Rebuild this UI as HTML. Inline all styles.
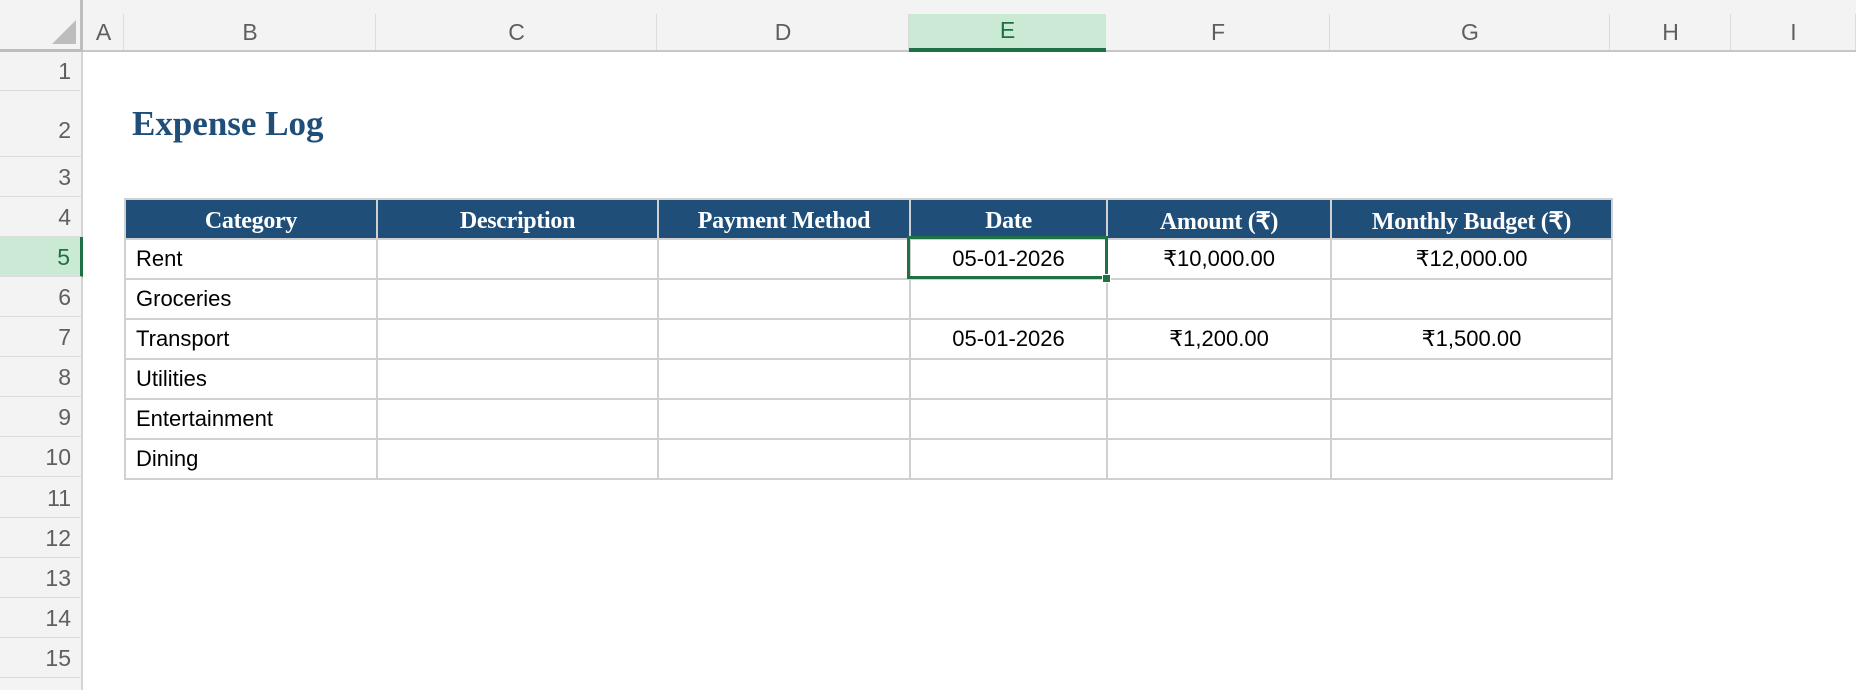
<!DOCTYPE html>
<html><head><meta charset="utf-8"><style>
*{margin:0;padding:0;box-sizing:border-box}
html,body{width:1856px;height:690px;overflow:hidden}
body{background:#fff;position:relative;font-family:"Liberation Sans",sans-serif}
.a{position:absolute}
.ch{position:absolute;top:0;height:52px;border-bottom:2px solid #c6c6c6;color:#5f5f5f;font-size:23px;display:flex;align-items:flex-end;justify-content:center;padding-bottom:4px;font-family:"Liberation Sans Narrow","Liberation Sans",sans-serif}
.ch::after{content:"";position:absolute;right:0;top:14px;bottom:0;width:1px;background:#dcdcdc}
.rh{position:absolute;left:0;width:83px;background:#f3f3f3;border-right:2px solid #d4d4d4;border-bottom:1px solid #dcdcdc;color:#5f5f5f;font-size:23px;text-align:right;padding-right:10px;display:flex;align-items:flex-end;justify-content:flex-end;padding-bottom:5px;font-family:"Liberation Sans Narrow","Liberation Sans",sans-serif}
table{position:absolute;left:124px;top:198px;border-collapse:collapse}
td,th{border:2px solid #d0d0d0;height:40px;padding:0 10px;font-size:22px;font-family:"Liberation Sans","DejaVu Sans",sans-serif;color:#000;font-weight:normal}
th{background:#1f4e79;color:#fff;font-family:"Liberation Serif",serif;font-weight:bold;font-size:24px;height:40px;padding-top:4px;text-align:center;border-color:#d0d0d0;letter-spacing:-0.3px}
td.c{text-align:center}
</style></head><body>
<div class="a" style="left:0;top:0;width:1856px;height:52px;background:#f3f3f3;border-bottom:2px solid #c6c6c6"></div>
<div class="a" style="left:0;top:0;width:83px;height:52px;background:#f3f3f3;border-right:3px solid #bdbdbd;border-bottom:3px solid #bdbdbd"></div>
<div class="a" style="left:52px;top:20px;width:0;height:0;border-left:24px solid transparent;border-bottom:24px solid #bdbdbd"></div>
<div class="ch" style="left:83px;width:41px">A</div>
<div class="ch" style="left:124px;width:252px">B</div>
<div class="ch" style="left:376px;width:281px">C</div>
<div class="ch" style="left:657px;width:252px">D</div>
<div class="a" style="left:909px;top:14px;width:197px;height:38px;background:#caead6;border-bottom:4px solid #1e7145"></div>
<div class="ch" style="left:909px;width:197px;color:#1e7145;border-bottom:4px solid #1e7145">E</div>
<div class="ch" style="left:1106px;width:224px">F</div>
<div class="ch" style="left:1330px;width:280px">G</div>
<div class="ch" style="left:1610px;width:121px">H</div>
<div class="ch" style="left:1731px;width:125px">I</div>

<div class="rh" style="top:52px;height:39px">1</div>
<div class="rh" style="top:91px;height:66px;padding-bottom:12px">2</div>
<div class="rh" style="top:157px;height:40px">3</div>
<div class="rh" style="top:197px;height:40px">4</div>
<div class="rh" style="top:237px;height:40px;background:#caead6;color:#1e7145;border-right:3px solid #1e7145">5</div>
<div class="rh" style="top:277px;height:40px">6</div>
<div class="rh" style="top:317px;height:40px">7</div>
<div class="rh" style="top:357px;height:40px">8</div>
<div class="rh" style="top:397px;height:40px">9</div>
<div class="rh" style="top:437px;height:40px">10</div>
<div class="rh" style="top:477px;height:41px">11</div>
<div class="rh" style="top:518px;height:40px">12</div>
<div class="rh" style="top:558px;height:40px">13</div>
<div class="rh" style="top:598px;height:40px">14</div>
<div class="rh" style="top:638px;height:40px">15</div>
<div class="rh" style="top:678px;height:12px;border-bottom:none"></div>

<div class="a" style="left:132px;top:104px;font-family:'Liberation Serif',serif;font-weight:bold;font-size:35px;color:#1f4e79">Expense Log</div>

<table>
<colgroup><col style="width:252px"><col style="width:281px"><col style="width:252px"><col style="width:197px"><col style="width:224px"><col style="width:281px"></colgroup>
<tr><th>Category</th><th>Description</th><th>Payment Method</th><th>Date</th><th>Amount (₹)</th><th>Monthly Budget (₹)</th></tr>
<tr><td>Rent</td><td></td><td></td><td class="c">05-01-2026</td><td class="c">₹10,000.00</td><td class="c">₹12,000.00</td></tr>
<tr><td>Groceries</td><td></td><td></td><td></td><td></td><td></td></tr>
<tr><td>Transport</td><td></td><td></td><td class="c">05-01-2026</td><td class="c">₹1,200.00</td><td class="c">₹1,500.00</td></tr>
<tr><td>Utilities</td><td></td><td></td><td></td><td></td><td></td></tr>
<tr><td>Entertainment</td><td></td><td></td><td></td><td></td><td></td></tr>
<tr><td>Dining</td><td></td><td></td><td></td><td></td><td></td></tr>
</table>
<div class="a" style="left:907px;top:236px;width:201px;height:43px;border:3px solid #1e7145"></div>
<div class="a" style="left:1102px;top:274px;width:9px;height:9px;background:#1e7145;border:1px solid #fff"></div>
</body></html>
